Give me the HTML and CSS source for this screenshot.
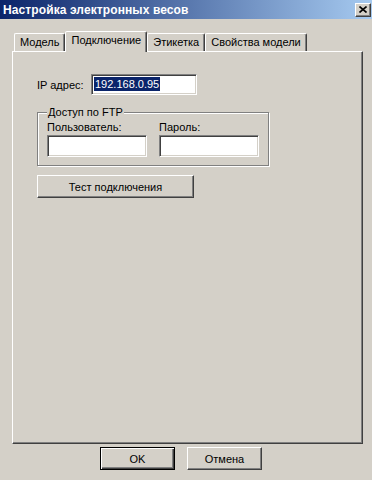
FILE: index.html
```html
<!DOCTYPE html>
<html lang="ru">
<head>
    <meta charset="UTF-8">
    <title>Настройка электронных весов</title>
    <link rel="stylesheet" href="styles.css">
</head>
<body>
<div id="titlebar">
    <span id="title">Настройка электронных весов</span>
    <span id="close">
        <svg width="8" height="7" viewBox="0 0 8 7"><path d="M0.5 0.5L7.5 6.5M7.5 0.5L0.5 6.5" stroke="#000" stroke-width="1.6"/></svg>
    </span>
</div>
<div id="dialog">
    <ul id="tabs">
        <li class="tab">Модель</li>
        <li class="tab active">Подключение</li>
        <li class="tab">Этикетка</li>
        <li class="tab">Свойства модели</li>
    </ul>
    <div id="page">
        <div class="ip-row">
            <span class="ip-label">IP адрес:</span>
            <div class="field ip"><span class="sel">192.168.0.95</span></div>
        </div>
        <fieldset class="group">
            <legend>Доступ по FTP</legend>
            <div class="cols">
                <div class="col">
                    <span class="lbl">Пользователь:</span>
                    <div class="field login"></div>
                </div>
                <div class="col">
                    <span class="lbl">Пароль:</span>
                    <div class="field login"></div>
                </div>
            </div>
        </fieldset>
        <div class="btn test">Тест подключения</div>
    </div>
    <div id="actions">
        <div class="btn default">OK</div>
        <div class="btn">Отмена</div>
    </div>
</div>
</body>
</html>
```
FILE: styles.css
```css
*{
    margin: 0;
    padding: 0;
    box-sizing: border-box;
}
ul{
    list-style: none;
}
body{
    width: 372px;
    height: 480px;
    overflow: hidden;
    background: #d4d0c8;
    font: 11px "Liberation Sans", Arial, sans-serif;
    color: #000;
}

#titlebar{
    height: 19px;
    display: flex;
    align-items: center;
    justify-content: space-between;
    padding: 0 1px 0 3px;
    background: linear-gradient(to right, #0a246a, #a6caf0);
    color: #fff;
    font-weight: bold;
    font-size: 12px;
    letter-spacing: 0.1px;
}
#close{
    width: 16px;
    height: 14px;
    display: flex;
    align-items: center;
    justify-content: center;
    background: #d4d0c8;
    border: 1px solid;
    border-color: #fff #404040 #404040 #fff;
    box-shadow: inset -1px -1px #808080;
}

#dialog{
    padding: 12px 9px 0 12px;
}
#tabs{
    display: flex;
    align-items: flex-end;
    height: 20px;
    padding-left: 2px;
}
.tab{
    height: 18px;
    padding: 0 5px;
    line-height: 16px;
    border: 1px solid;
    border-bottom: none;
    border-color: #fff #404040 transparent #fff;
    box-shadow: inset -1px 0 #808080;
    border-radius: 2px 2px 0 0;
}
.tab.active{
    height: 21px;
    margin-bottom: -1px;
    line-height: 17px;
    background: #d4d0c8;
    position: relative;
    z-index: 1;
}

#page{
    height: 393px;
    padding: 22px 0 0 24px;
    border: 1px solid;
    border-color: #fff #404040 #404040 #fff;
    box-shadow: inset -1px -1px #808080;
}
.ip-row{
    display: flex;
    align-items: center;
}
.ip-label{
    width: 54px;
}
.field{
    background: #fff;
    border: 1px solid;
    border-color: #808080 #fff #fff #808080;
    box-shadow: inset 1px 1px #404040, inset -1px -1px #d4d0c8;
}
.ip{
    width: 106px;
    height: 21px;
    padding: 2px 0 0 2px;
}
.sel{
    display: inline-block;
    height: 14px;
    line-height: 14px;
    padding: 0 1px;
    background: #0a246a;
    color: #fff;
}

.group{
    width: 232px;
    margin-top: 11px;
    padding: 2px 9px 8px;
    border: 1px solid #808080;
    box-shadow: inset 1px 1px #fff, 1px 1px #fff;
}
.group legend{
    padding: 0 1px;
    line-height: 13px;
    background: #d4d0c8;
}
.cols{
    display: flex;
    gap: 12px;
}
.col{
    display: flex;
    flex-direction: column;
    gap: 2px;
}
.login{
    width: 100px;
    height: 22px;
}

.btn{
    height: 23px;
    display: flex;
    align-items: center;
    justify-content: center;
    border: 1px solid;
    border-color: #fff #404040 #404040 #fff;
    box-shadow: inset -1px -1px #808080;
}
.test{
    width: 157px;
    margin-top: 9px;
}
#actions{
    display: flex;
    gap: 12px;
    margin-top: 3px;
    padding-left: 88px;
}
#actions .btn{
    width: 75px;
}
#actions .default{
    border-color: #000;
    box-shadow: inset 1px 1px #fff, inset -1px -1px #404040, inset -2px -2px #808080;
}
```
